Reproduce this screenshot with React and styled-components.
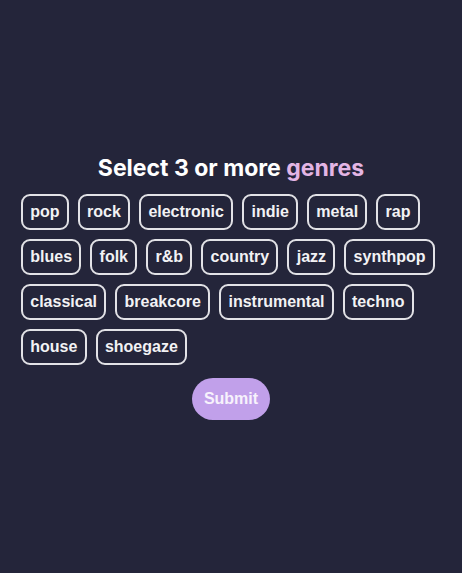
import React from 'react'
import styled, { createGlobalStyle } from 'styled-components'

const Global = createGlobalStyle`
  html, body {
    margin: 0;
    padding: 0;
    background: #24253a;
  }
`

const Page = styled.div`
  min-height: 100vh;
  box-sizing: border-box;
  display: flex;
  flex-direction: column;
  justify-content: center;
  align-items: center;
  padding: 1px 21px 0;
`

const Title = styled.h1`
  margin: 0 0 12px;
  font-family: Inter, "Liberation Sans", sans-serif;
  font-size: 23px;
  font-weight: 700;
  line-height: 28px;
  color: #ffffff;
  text-align: center;
`

const Accent = styled.span`
  color: #e3b5e4;
`

const Chips = styled.div`
  align-self: stretch;
  display: flex;
  flex-wrap: wrap;
  gap: 9px;
`

const Chip = styled.button`
  box-sizing: border-box;
  height: 36px;
  padding: 0 7.25px;
  border: 2px solid #e2e2e6;
  border-radius: 9px;
  background: transparent;
  color: #f2f2f4;
  font-family: "Liberation Sans", Arial, sans-serif;
  font-size: 16px;
  font-weight: 700;
  cursor: pointer;
`

const Submit = styled.button`
  margin-top: 13px;
  height: 42px;
  padding: 0 12px;
  border: none;
  border-radius: 21px;
  background: #c1a0ea;
  color: #f7f2fc;
  font-family: "Liberation Sans", Arial, sans-serif;
  font-size: 16px;
  font-weight: 700;
  cursor: pointer;
`

const genres = [
  'pop', 'rock', 'electronic', 'indie', 'metal', 'rap',
  'blues', 'folk', 'r&b', 'country', 'jazz', 'synthpop',
  'classical', 'breakcore', 'instrumental', 'techno',
  'house', 'shoegaze',
]

const App = () => {
  return (
    <>
      <Global />
      <Page>
        <Title>
          Select 3 or more <Accent>genres</Accent>
        </Title>
        <Chips>
          {genres.map((g) => (
            <Chip key={g}>{g}</Chip>
          ))}
        </Chips>
        <Submit>Submit</Submit>
      </Page>
    </>
  )
}

export default App
